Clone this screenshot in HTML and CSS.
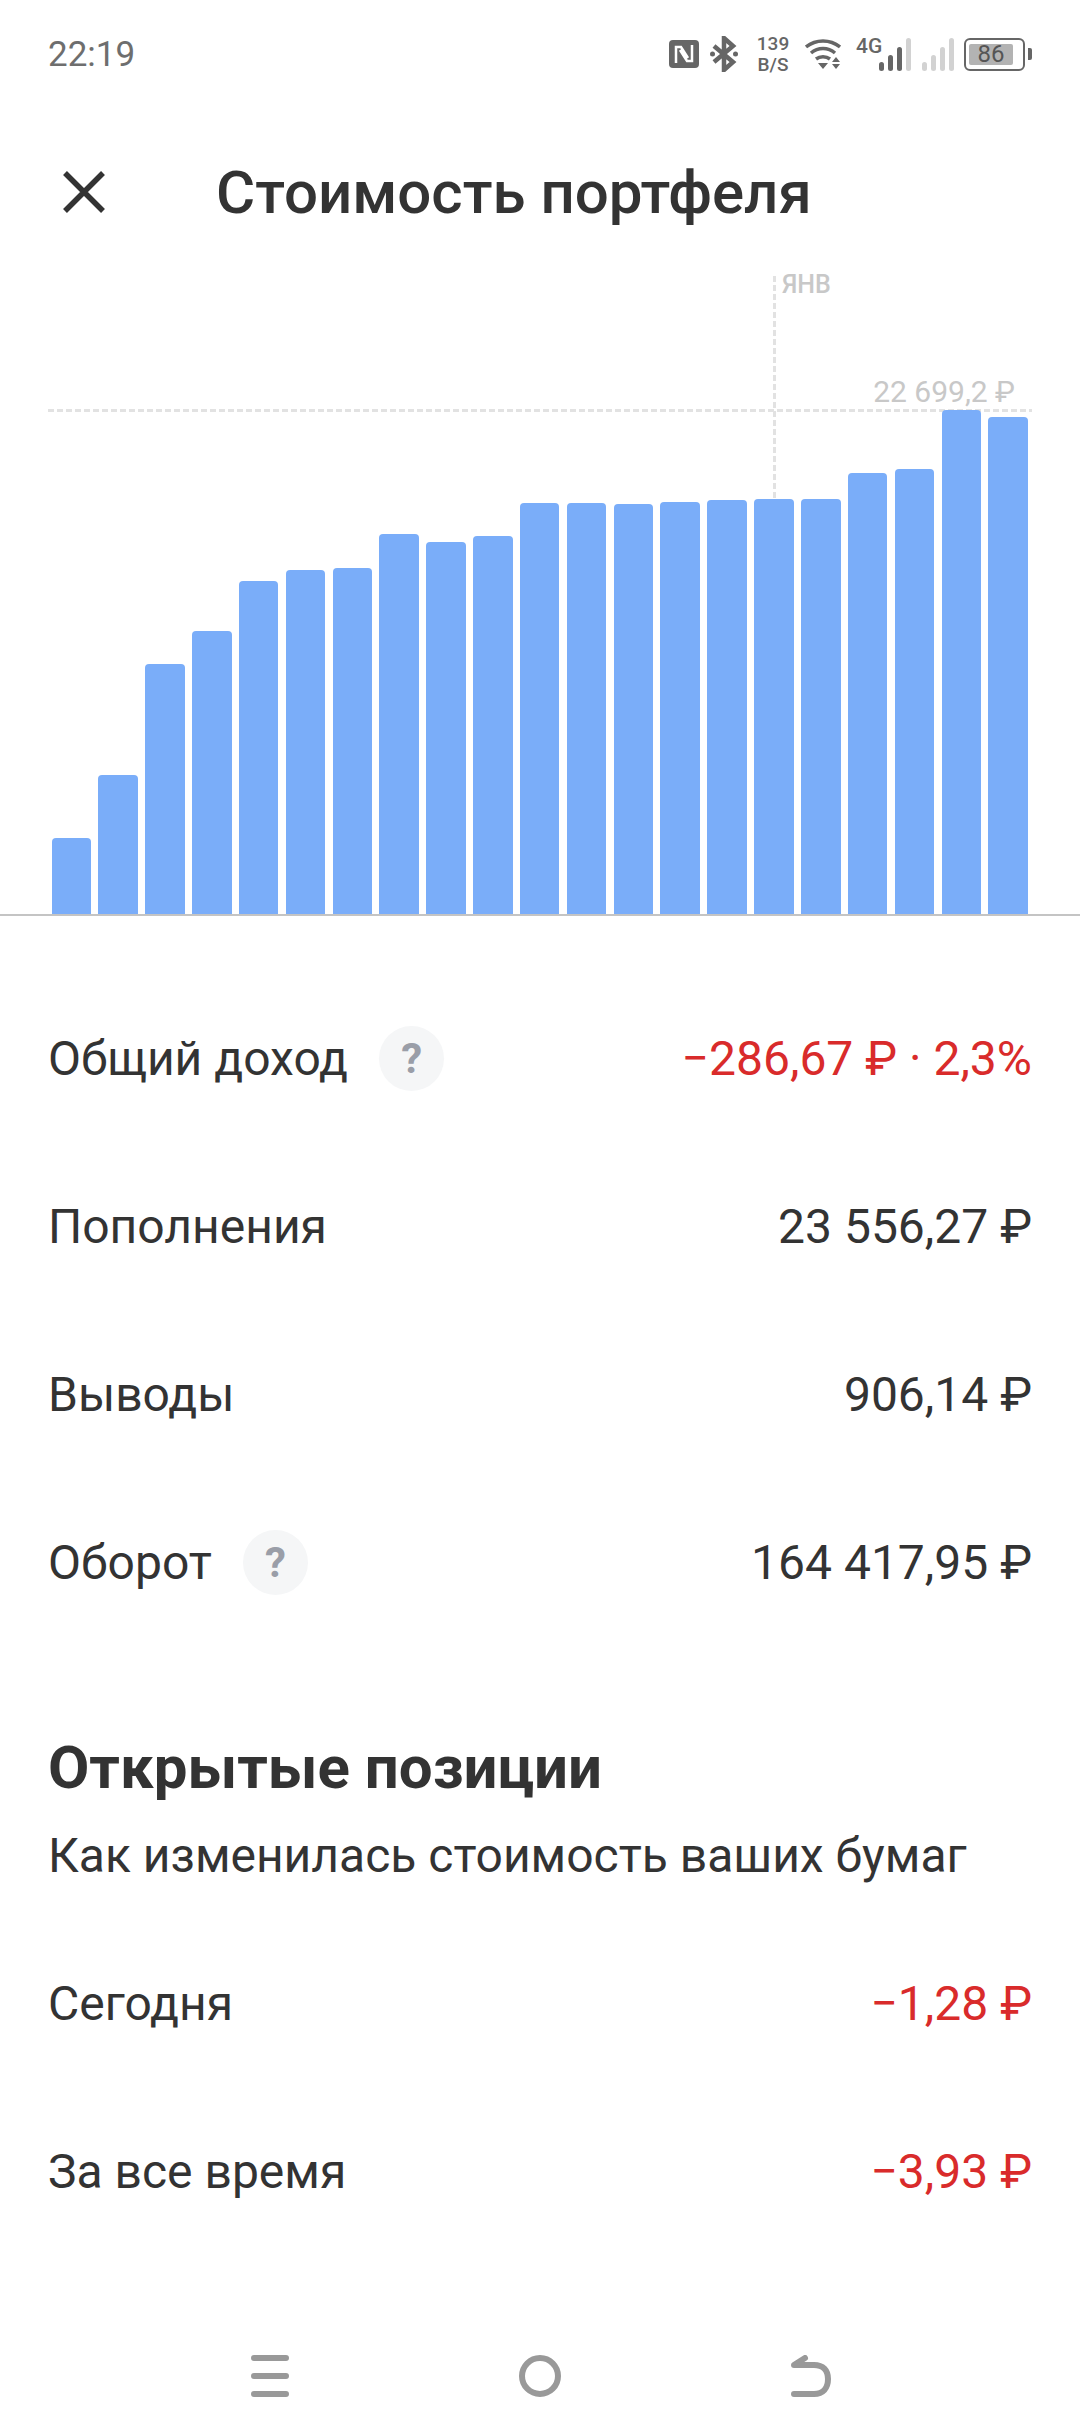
FILE: index.html
```html
<!DOCTYPE html>
<html lang="ru">

<head>
  <meta charset="UTF-8">
  <meta name="viewport" content="width=device-width, initial-scale=1.0">
  <title>Стоимость портфеля</title>
  <link rel="stylesheet" href="styles.css">
</head>

<body>
  <div class="status-bar">
    <span class="clock">22:19</span>
    <div class="status-icons">
      <svg class="icon-nfc" width="30" height="28" viewBox="0 0 30 28">
        <rect width="30" height="28" rx="4" fill="#666"/>
        <path d="M7 23V7h5l7 11M23 5v16h-5L11 10" fill="none" stroke="#fff" stroke-width="2.500"/>
      </svg>
      <svg class="icon-bt" width="28" height="36" viewBox="0 0 28 36">
        <path d="M4 10l19 16-9 8V2l9 8L4 26" fill="none" stroke="#666" stroke-width="4.500"/>
        <circle cx="2.500" cy="18" r="2.500" fill="#666"/>
        <circle cx="25.500" cy="18" r="2.500" fill="#666"/>
      </svg>
      <div class="net-speed"><span>139</span><span>B/S</span></div>
      <svg class="icon-wifi" width="36" height="32" viewBox="0 0 36 32">
        <path d="M1 9c10-8 24-8 34 0M6 15c7-6 17-6 24 0M11 21c4-3 10-3 14 0" fill="none" stroke="#666" stroke-width="3.500"/>
        <path d="M13 25h10l-5 6zM27 24l4-5 4 5zM27 26h8l-4 5z" fill="#666"/>
      </svg>
      <span class="net-type">4G</span>
      <svg class="icon-signal" width="33" height="33" viewBox="0 0 33 33">
        <rect x="0" y="24" width="5" height="9" rx="2.500" fill="#666"/>
        <rect x="9" y="17" width="5" height="16" rx="2.500" fill="#666"/>
        <rect x="18" y="9" width="5" height="24" rx="2.500" fill="#666"/>
        <rect x="27" y="0" width="5" height="33" rx="2.500" fill="#d2d2d2"/>
      </svg>
      <svg class="icon-signal-off" width="33" height="33" viewBox="0 0 33 33">
        <rect x="0" y="24" width="5" height="9" rx="2.500" fill="#d2d2d2"/>
        <rect x="9" y="17" width="5" height="16" rx="2.500" fill="#d2d2d2"/>
        <rect x="18" y="9" width="5" height="24" rx="2.500" fill="#d2d2d2"/>
        <rect x="27" y="0" width="5" height="33" rx="2.500" fill="#d2d2d2"/>
      </svg>
      <div class="battery">
        <div class="battery-body"><span class="battery-level">86</span></div>
        <div class="battery-tip"></div>
      </div>
    </div>
  </div>

  <div class="header">
    <svg class="close-icon" width="44" height="44" viewBox="0 0 44 44">
      <path d="M3 3l38 38M41 3L3 41" fill="none" stroke="#333" stroke-width="5.500"/>
    </svg>
    <h1>Стоимость портфеля</h1>
  </div>

  <div class="chart">
    <div class="month-line"></div>
    <span class="month-label">янв</span>
    <div class="max-line"></div>
    <span class="max-label">22 699,2 ₽</span>
    <div class="bar" style="height: 76px"></div>
    <div class="bar" style="height: 139px"></div>
    <div class="bar" style="height: 250px"></div>
    <div class="bar" style="height: 283px"></div>
    <div class="bar" style="height: 333px"></div>
    <div class="bar" style="height: 344px"></div>
    <div class="bar" style="height: 346px"></div>
    <div class="bar" style="height: 380px"></div>
    <div class="bar" style="height: 372px"></div>
    <div class="bar" style="height: 378px"></div>
    <div class="bar" style="height: 411px"></div>
    <div class="bar" style="height: 411px"></div>
    <div class="bar" style="height: 410px"></div>
    <div class="bar" style="height: 412px"></div>
    <div class="bar" style="height: 414px"></div>
    <div class="bar" style="height: 415px"></div>
    <div class="bar" style="height: 415px"></div>
    <div class="bar" style="height: 441px"></div>
    <div class="bar" style="height: 445px"></div>
    <div class="bar" style="height: 504px"></div>
    <div class="bar" style="height: 497px"></div>
  </div>

  <div class="summary">
    <div class="row">
      <div class="row-label">Общий доход <span class="help">?</span></div>
      <div class="row-value negative">−286,67 ₽ · 2,3%</div>
    </div>
    <div class="row">
      <div class="row-label">Пополнения</div>
      <div class="row-value">23 556,27 ₽</div>
    </div>
    <div class="row">
      <div class="row-label">Выводы</div>
      <div class="row-value">906,14 ₽</div>
    </div>
    <div class="row">
      <div class="row-label">Оборот <span class="help">?</span></div>
      <div class="row-value">164 417,95 ₽</div>
    </div>
  </div>

  <div class="positions">
    <h2>Открытые позиции</h2>
    <p>Как изменилась стоимость ваших бумаг</p>
    <div class="row">
      <div class="row-label">Сегодня</div>
      <div class="row-value negative">−1,28 ₽</div>
    </div>
    <div class="row">
      <div class="row-label">За все время</div>
      <div class="row-value negative">−3,93 ₽</div>
    </div>
  </div>

  <div class="nav-bar">
    <svg width="38" height="42" viewBox="0 0 38 42">
      <path d="M3 3h32M3 21h32M3 39h32" fill="none" stroke="#999" stroke-width="6" stroke-linecap="round"/>
    </svg>
    <svg width="42" height="42" viewBox="0 0 42 42">
      <circle cx="21" cy="21" r="18" fill="none" stroke="#999" stroke-width="6"/>
    </svg>
    <svg width="40" height="42" viewBox="0 0 40 42">
      <path d="M3 39h20c9 0 14-6 14-15s-5-14-14-14H3l11-7" fill="none" stroke="#999" stroke-width="6" stroke-linecap="round" stroke-linejoin="round"/>
    </svg>
  </div>
</body>

</html>
```
FILE: styles.css
```css
* {
  box-sizing: border-box;
}

body {
  background-color: #fff;
  color: #333;
  font-family: 'Roboto', sans-serif;
  width: 1080px;
  height: 2436px;
  margin: 0;
  overflow: hidden;
}

.status-bar {
  display: flex;
  justify-content: space-between;
  align-items: center;
  height: 108px;
  padding: 0 48px;
}

.clock {
  color: #6e6e6e;
  font-size: 35px;
}

.status-icons {
  display: flex;
  align-items: center;
  color: #666;
}

.icon-bt {
  margin-left: 11px;
}

.net-speed {
  display: flex;
  flex-direction: column;
  align-items: center;
  width: 32px;
  margin-left: 19px;
  font-size: 19px;
  line-height: 21px;
  font-weight: 500;
}

.icon-wifi {
  margin-left: 16px;
}

.net-type {
  width: 25px;
  margin-left: 15px;
  margin-top: -16px;
  font-size: 21px;
  font-weight: 500;
}

.icon-signal {
  margin-left: -2px;
}

.icon-signal-off {
  margin-left: 10px;
}

.battery {
  display: flex;
  align-items: center;
  margin-left: 9px;
}

.battery-body {
  width: 61px;
  height: 33px;
  padding: 4px 3px;
  border: 2px solid #666;
  border-radius: 6px;
}

.battery-level {
  display: block;
  width: 44px;
  height: 21px;
  background-color: #b3b3b3;
  border-radius: 2px;
  color: #555;
  text-align: center;
  font-size: 24px;
  line-height: 21px;
}

.battery-tip {
  width: 4px;
  height: 12px;
  margin-left: 3px;
  background-color: #666;
  border-radius: 0 2px 2px 0;
}

.header {
  display: flex;
  align-items: center;
  height: 168px;
  padding-left: 62px;
}

h1 {
  margin: 0 0 0 110px;
  font-size: 60px;
  font-weight: 500;
}

.chart {
  position: relative;
  display: flex;
  align-items: flex-end;
  gap: 7.35px;
  height: 640px;
  padding-left: 51.500px;
  border-bottom: 2px solid #c4c4c4;
}

.bar {
  position: relative;
  width: 39.500px;
  background-color: #7aadf9;
  border-radius: 4px 4px 0 0;
}

.month-line {
  position: absolute;
  left: 772.500px;
  top: 0;
  bottom: 0;
  width: 3px;
  background: repeating-linear-gradient(to bottom, #e2e2e2 0, #e2e2e2 6px, transparent 6px, transparent 9px);
}

.month-label {
  position: absolute;
  left: 782px;
  top: -6px;
  color: #c8c8c8;
  font-size: 25px;
  font-weight: 500;
  text-transform: uppercase;
}

.max-line {
  position: absolute;
  left: 48px;
  right: 48px;
  top: 133px;
  height: 3px;
  background: repeating-linear-gradient(to right, #e2e2e2 0, #e2e2e2 6px, transparent 6px, transparent 9px);
}

.max-label {
  position: absolute;
  right: 65px;
  top: 98px;
  color: #c8c8c8;
  font-size: 30px;
}

.summary {
  padding-top: 58px;
}

.row {
  display: flex;
  justify-content: space-between;
  align-items: center;
  height: 168px;
  padding: 0 48px;
  font-size: 48px;
}

.row-label {
  display: flex;
  align-items: center;
}

.help {
  display: block;
  width: 65px;
  height: 65px;
  margin-left: 31px;
  background-color: #f5f6f7;
  border-radius: 50%;
  color: #9a9ea8;
  text-align: center;
  font-size: 42px;
  font-weight: 700;
  line-height: 65px;
}

.negative {
  color: #d92b2b;
}

.positions {
  padding-top: 86px;
}

h2 {
  margin: 0;
  padding: 0 48px;
  font-size: 60px;
  font-weight: 700;
}

.positions p {
  margin: 24px 0 35px;
  padding: 0 48px;
  font-size: 48px;
}

.nav-bar {
  position: absolute;
  left: 0;
  right: 0;
  top: 2355px;
  display: flex;
  justify-content: space-between;
  padding: 0 249px 0 251px;
}
```
